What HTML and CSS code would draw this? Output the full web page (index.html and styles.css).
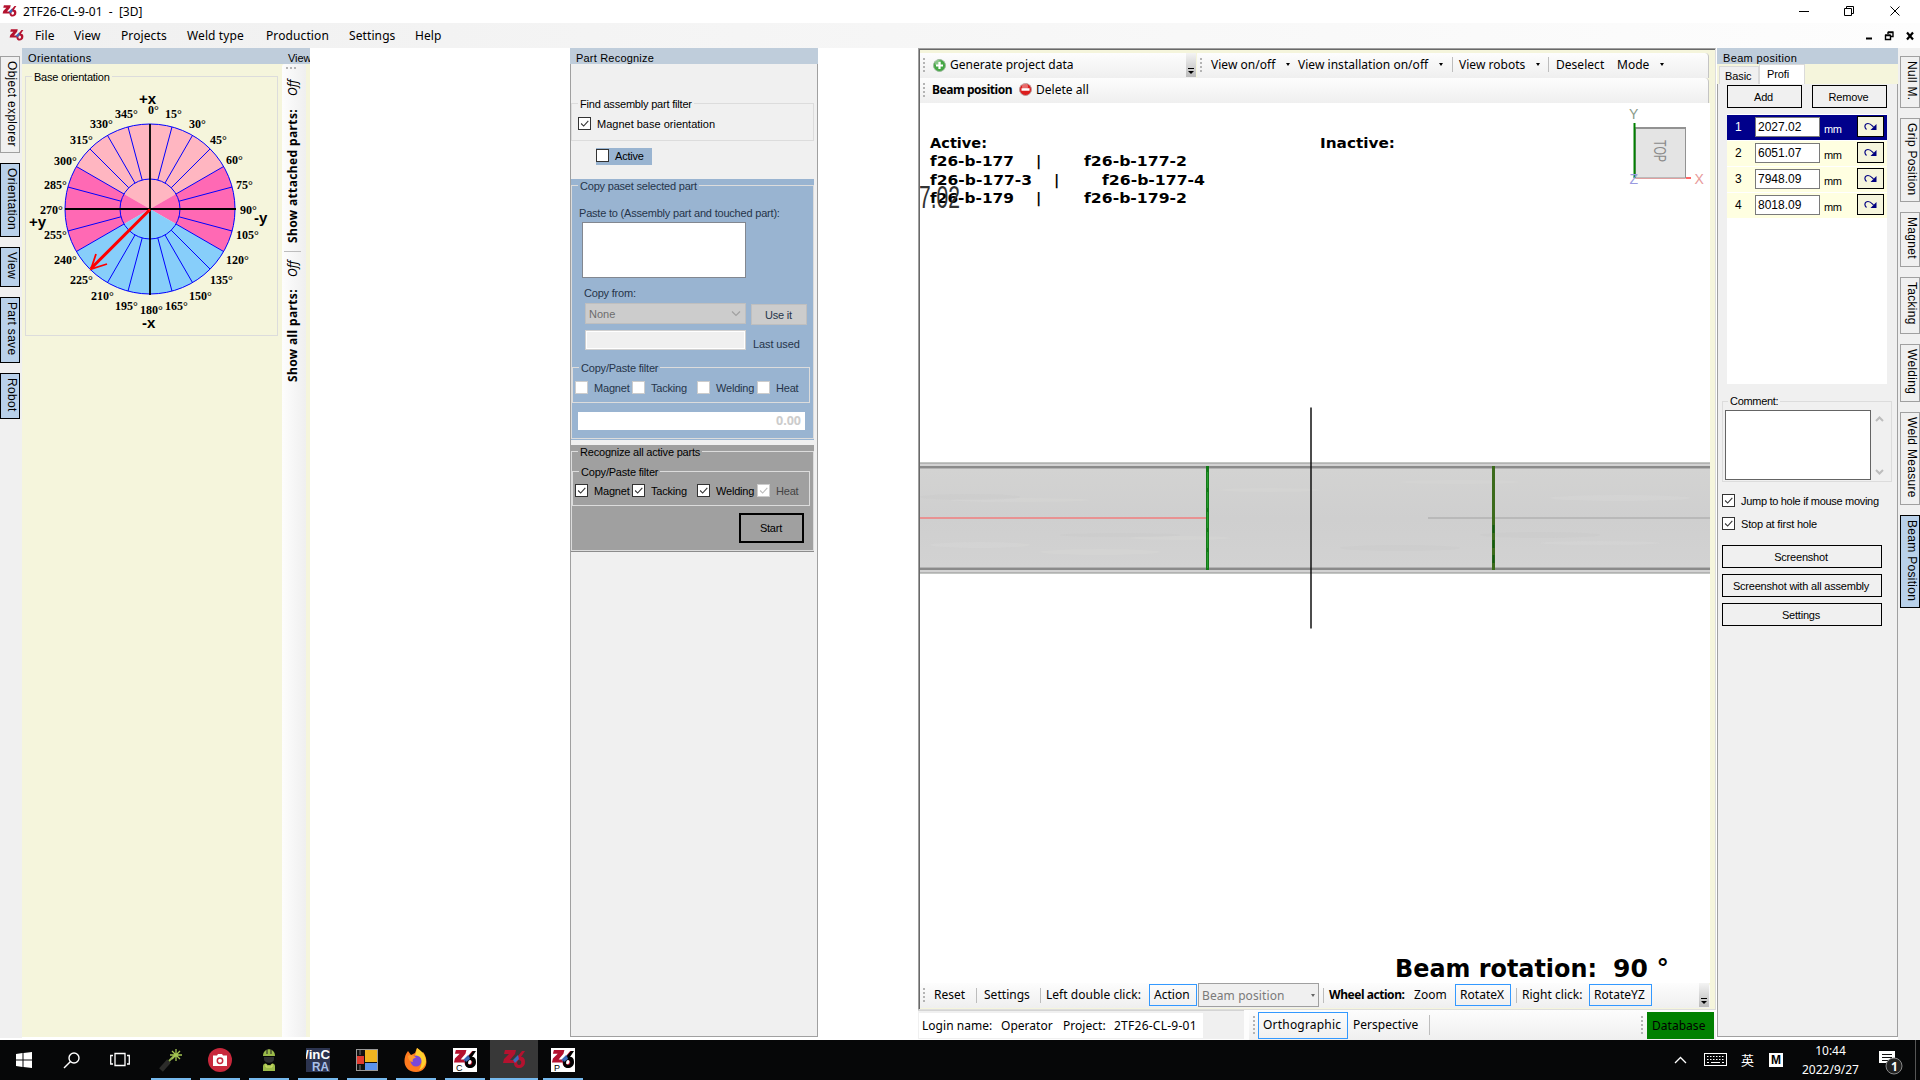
FILE: index.html
```html
<!DOCTYPE html>
<html lang="en">
<head>
<meta charset="utf-8">
<title>2TF26-CL-9-01 - [3D]</title>
<link rel="stylesheet" href="styles.css">
</head>
<body>
<svg width="0" height="0" class="defs">
  <defs>
    <symbol id="z6" viewBox="0 0 24 24">
      <path d="M3 2h11l-1 4-5 6h6l-1 3H1l1-4 5-5H2zM20 3h3l-4 6c3 0 4 2 4 5 0 4-3 6-6 6s-5-2-5-5c0-2 1-4 3-6zM17 12c-2 0-3 5 0 5s3-5 0-5z"/>
      <path d="M11 12l5-5 1 4-4 4z" fill="#3c6ab8"/>
    </symbol>
    <symbol id="tick" viewBox="0 0 13 13"><path d="M2.500 6.500l3 3 5.500-6" fill="none" stroke="currentColor" stroke-width="1.300"/></symbol>
    <symbol id="redo" viewBox="0 0 13 9"><path d="M2.500 7.500C0 5.500.5 1.500 4 1.500c2.500 0 3.500 1.500 5.500 3.500" fill="none" stroke="#000080" stroke-width="1.200"/><path d="M12.500 2v6H6.500z" fill="#000080"/></symbol>
  </defs>
</svg>

<header class="titlebar">
  <svg class="logo" width="15" height="15"><use href="#z6"/></svg>
  <span>2TF26-CL-9-01&nbsp; - &nbsp;[3D]</span>
  <svg class="win-buttons" width="104" height="14" fill="none" stroke="#000">
    <path d="M0 7.500h10M45.500 4.500h7v7h-7zM47.500 4V2.500h7v7H53M91.500 2.500l9 9M100.500 2.500l-9 9"/>
  </svg>
</header>

<nav class="menubar">
  <svg class="logo" width="15" height="15"><use href="#z6"/></svg>
  <span>File</span><span>View</span><span>Projects</span><span>Weld type</span><span>Production</span><span>Settings</span><span>Help</span>
  <svg class="mdi-buttons" width="50" height="14" fill="none" stroke="#000">
    <path d="M0 9.500h6" stroke-width="2"/><path d="M19.500 6.500h5v4h-5zM22 5V3.500h5v4h-2M22 3h5.500M19 6h5.500" stroke-width="1.400"/><path d="M41 3.500l6 7M47 3.500l-6 7" stroke-width="2.200"/>
  </svg>
</nav>

<main class="work">
  <aside class="side-tabs left">
    <div class="vtab t1">Object explorer</div>
    <div class="vtab on t2">Orientation</div>
    <div class="vtab on t3">View</div>
    <div class="vtab on t4">Part save</div>
    <div class="vtab on t5">Robot</div>
  </aside>

  <section class="orient">
    <h2 class="cap">Orientations</h2>
    <fieldset class="base">
      <legend>Base orientation</legend>
      <svg class="dial" width="250" height="244" viewBox="26 90 250 244">
        <path d="M150 209L76.400 166.500A85 85 0 0 1 223.600 166.500Z" fill="#ffb6c1"/>
        <path d="M150 209L223.600 166.500A85 85 0 0 1 223.600 251.500ZM150 209L76.400 251.500A85 85 0 0 1 76.400 166.500Z" fill="#ff69b4"/>
        <path d="M150 209L223.600 251.500A85 85 0 0 1 76.400 251.500Z" fill="#87cefa"/>
        <g fill="none" stroke="#00f">
          <circle cx="150" cy="209" r="85"/><circle cx="150" cy="209" r="30"/>
          <path d="M157.800 180L172 126.900M165 183L192.500 135.400M171.200 187.800L210.100 148.900M176 194L223.600 166.500M179 201.200L232.100 187M179 216.800L232.100 231M176 224L223.600 251.500M171.200 230.200L210.100 269.100M165 235L192.500 282.600M157.800 238L172 291.100M142.200 180L128 126.900M135 183L107.500 135.400M128.800 187.800L89.900 148.900M124 194L76.400 166.500M121 201.200L67.900 187M121 216.800L67.900 231M124 224L76.400 251.500M135 235L107.500 282.600M142.200 238L128 291.100"/>
        </g>
        <path d="M150 124v171M65 209h171" stroke="#000" stroke-width="1.800"/>
        <path d="M150 209.500L91 268.500" stroke="#f00" stroke-width="3"/>
        <path d="M96 254l-5 15 16-5" stroke="#f00" stroke-width="1.800" fill="none"/>
        <g class="deg">
          <text x="148" y="114">0°</text><text x="165" y="118">15°</text><text x="189" y="128">30°</text><text x="210" y="144">45°</text><text x="226" y="164">60°</text><text x="236" y="189">75°</text><text x="240" y="214">90°</text><text x="236" y="239">105°</text><text x="226" y="264">120°</text><text x="210" y="284">135°</text><text x="189" y="300">150°</text><text x="165" y="310">165°</text><text x="140" y="314">180°</text><text x="115" y="310">195°</text><text x="91" y="300">210°</text><text x="70" y="284">225°</text><text x="54" y="264">240°</text><text x="44" y="239">255°</text><text x="40" y="214">270°</text><text x="44" y="189">285°</text><text x="54" y="165">300°</text><text x="70" y="144">315°</text><text x="90" y="128">330°</text><text x="115" y="118">345°</text>
        </g>
        <g class="axis"><text x="139" y="104">+x</text><text x="142" y="328">-x</text><text x="29" y="227">+y</text><text x="254" y="223">-y</text></g>
      </svg>
    </fieldset>
  </section>

  <section class="viewcol">
    <h2 class="cap">View</h2>
    <div class="strip">
      <i class="hgrip"></i>
      <em class="up o1">Off</em><b class="up s1">Show attached parts:</b><hr>
      <em class="up o2">Off</em><b class="up s2">Show all parts:</b>
    </div>
  </section>

  <section class="recog">
    <h2 class="cap">Part Recognize</h2>
    <fieldset class="find">
      <legend>Find assembly part filter</legend>
      <label class="cb"><svg class="box"><use href="#tick"/></svg>Magnet base orientation</label>
    </fieldset>
    <label class="cb active-cb"><svg class="box"></svg>Active</label>
    <div class="blue">
      <fieldset>
        <legend>Copy paset selected part</legend>
        <p class="paste">Paste to (Assembly part and touched part):</p>
        <div class="listbox"></div>
        <p class="from">Copy from:</p>
        <div class="line l1"><div class="combo"><span>None</span><svg width="10" height="6"><path d="M1 .5l4 4 4-4" fill="none" stroke="#a0a0a0" stroke-width="1.200"/></svg></div><div class="useit">Use it</div></div>
        <div class="line l2"><div class="field"></div><span>Last used</span></div>
        <fieldset class="filter">
          <legend>Copy/Paste filter</legend>
          <div class="checks off"><label class="cb"><svg class="box"></svg>Magnet</label><label class="cb"><svg class="box"></svg>Tacking</label><label class="cb"><svg class="box"></svg>Welding</label><label class="cb"><svg class="box"></svg>Heat</label></div>
        </fieldset>
        <div class="num">0.00</div>
      </fieldset>
    </div>
    <div class="grey">
      <fieldset>
        <legend>Recognize all active parts</legend>
        <fieldset class="filter">
          <legend>Copy/Paste filter</legend>
          <div class="checks"><label class="cb"><svg class="box"><use href="#tick"/></svg>Magnet</label><label class="cb"><svg class="box"><use href="#tick"/></svg>Tacking</label><label class="cb"><svg class="box"><use href="#tick"/></svg>Welding</label><label class="cb dim"><svg class="box"><use href="#tick"/></svg>Heat</label></div>
        </fieldset>
        <div class="start">Start</div>
      </fieldset>
    </div>
  </section>

  <section class="center">
    <div class="frame">
      <div class="bars">
        <div class="bar gen"><i class="grip"></i>
          <svg width="13" height="13"><circle cx="6.500" cy="6.500" r="6" fill="#45a845" stroke="#9ab89a"/><circle cx="5" cy="4" r="3" fill="#fff" opacity=".35"/><path d="M6.500 3v7M3 6.500h7" stroke="#fff" stroke-width="2.200"/></svg>
          <span>Generate project data</span>
          <svg class="more" width="10" height="24"><path d="M2 15.500h6" stroke="#000"/><path d="M2 18h6l-3 3z"/></svg></div>
        <div class="bar views"><i class="grip"></i><span>View on/off</span><i class="dd"></i><span>View installation on/off</span><i class="dd"></i><i class="sep"></i><span>View robots</span><i class="dd"></i><i class="sep"></i><span>Deselect</span><span>Mode</span><i class="dd"></i></div>
      </div>
      <div class="bar beam"><i class="grip"></i><b>Beam position</b>
        <svg width="13" height="13"><circle cx="6.500" cy="6.500" r="6" fill="#dc1e1e" stroke="#b99"/><circle cx="6" cy="3.500" r="3" fill="#fff" opacity=".35"/><path d="M2.500 6.500h8" stroke="#fff" stroke-width="2.500"/></svg>
        <span>Delete all</span></div>
      <svg class="scene" width="790" height="880" viewBox="920 103 790 880">
        <defs>
          <linearGradient id="steel" x2="0" y2="1"><stop offset="0" stop-color="#d3d3d2"/><stop offset=".5" stop-color="#cfcfcf"/><stop offset="1" stop-color="#d2d2d2"/></linearGradient>
        </defs>
        <rect x="920" y="462" width="790" height="112" fill="#d2d2d2"/>
        <rect x="920" y="469" width="790" height="98" fill="url(#steel)"/>
        <g fill="#d8d8d6" opacity=".45"><ellipse cx="1020" cy="500" rx="70" ry="2"/><ellipse cx="980" cy="545" rx="50" ry="3"/><ellipse cx="1100" cy="552" rx="60" ry="3"/><ellipse cx="1180" cy="538" rx="50" ry="2"/><ellipse cx="1270" cy="490" rx="50" ry="2"/><ellipse cx="1460" cy="482" rx="60" ry="2"/><ellipse cx="1620" cy="498" rx="70" ry="3"/><ellipse cx="1600" cy="543" rx="60" ry="2"/></g>
        <g fill="#c8c8c8" opacity=".3"><ellipse cx="970" cy="497" rx="50" ry="3"/><ellipse cx="1120" cy="535" rx="60" ry="2"/><ellipse cx="1400" cy="548" rx="60" ry="3"/><ellipse cx="1540" cy="535" rx="60" ry="3"/></g>
        <path d="M920 462.500h790M920 573.500h790" stroke="#c3c6c3"/>
        <path d="M920 463.500h790M920 572.500h790M920 468.500h790M920 567.500h790" stroke="#b2b2b2"/>
        <path d="M920 467h790M920 569h790" stroke="#8a8a8a" stroke-width="2"/>
        <path d="M920 518h287" stroke="#e89292" stroke-width="2"/>
        <path d="M1428 518h282" stroke="#b9b9b9" stroke-width="2"/>
        <path d="M1207.500 466v104" stroke="#127a18" stroke-width="3"/><path d="M1207.500 472v97" stroke="#2a9a30" stroke-dasharray="16 4"/>
        <path d="M1493.500 466v104" stroke="#3c6b1c" stroke-width="3"/><path d="M1493.500 525v40" stroke="#125c12" stroke-width="2" stroke-dasharray="8 7"/>
        <path d="M1311 407.500v221" stroke="#111" stroke-width="1.500"/>
        <g class="parts">
          <text x="930" y="148" textLength="57" lengthAdjust="spacingAndGlyphs">Active:</text><text x="1320" y="148" textLength="75" lengthAdjust="spacingAndGlyphs">Inactive:</text>
          <text x="930" y="166" textLength="84" lengthAdjust="spacingAndGlyphs">f26-b-177</text><text x="1036" y="166">|</text><text x="1084" y="166" textLength="103" lengthAdjust="spacingAndGlyphs">f26-b-177-2</text>
          <text x="930" y="185" textLength="102" lengthAdjust="spacingAndGlyphs">f26-b-177-3</text><text x="1054" y="185">|</text><text x="1102" y="185" textLength="103" lengthAdjust="spacingAndGlyphs">f26-b-177-4</text>
          <text x="930" y="203" textLength="84" lengthAdjust="spacingAndGlyphs">f26-b-179</text><text x="1036" y="203">|</text><text x="1084" y="203" textLength="103" lengthAdjust="spacingAndGlyphs">f26-b-179-2</text>
        </g>
        <text class="dim-label" x="919" y="207.500" textLength="41" lengthAdjust="spacingAndGlyphs">7.02</text>
        <rect x="1635.500" y="128.500" width="50" height="49.500" fill="#e4e4e4" stroke="#929292"/>
        <path d="M1635 128h51" stroke="#929292" stroke-width="2"/>
        <path d="M1636 178.500h49" stroke="#e0a0a0"/><path d="M1686 178h5" stroke="#f33" stroke-width="1.500"/>
        <path d="M1634.500 123v55" stroke="#008000" stroke-width="2"/>
        <g class="cube"><text x="1629" y="118.500" fill="#8a9a8a">Y</text><text x="1694.500" y="184" fill="#e89a9a">X</text><text x="1629.500" y="184" fill="#9a9ae0">Z</text></g>
        <text class="top" transform="translate(1654 140) rotate(90)" textLength="22" lengthAdjust="spacingAndGlyphs">TOP</text>
        <g class="rot"><text x="1395" y="976.500" textLength="202" lengthAdjust="spacingAndGlyphs">Beam rotation:</text><text x="1613" y="976.500" textLength="56" lengthAdjust="spacingAndGlyphs">90 °</text></g>
      </svg>
      <div class="bar bottom"><i class="grip"></i><span>Reset</span><i class="sep"></i><span>Settings</span><i class="sep"></i><span>Left double click:</span><span class="sel">Action</span><span class="bcombo">Beam position<i class="dd"></i></span><i class="sep"></i><b>Wheel action:</b><span>Zoom</span><span class="sel">RotateX</span><i class="sep"></i><span>Right click:</span><span class="sel">RotateYZ</span>
        <svg class="more" width="10" height="24"><path d="M2 15.500h6" stroke="#000"/><path d="M2 18h6l-3 3z"/></svg></div>
    </div>
    <div class="status">
      <div class="login"><span>Login name:</span><span>Operator</span><span>Project:</span><span>2TF26-CL-9-01</span></div>
      <div class="proj"><i class="grip"></i><span class="sel">Orthographic</span><span>Perspective</span><i class="sep"></i><i class="grip"></i><span class="db">Database</span></div>
    </div>
  </section>

  <section class="beampos">
    <h2 class="cap">Beam position</h2>
    <div class="tabs"><span>Basic</span><span class="cur">Profi</span></div>
    <div class="pane">
      <div class="two"><div class="btn">Add</div><div class="btn">Remove</div></div>
      <div class="list">
        <div class="row cur"><span>1</span><span class="inp">2027.02</span><span class="mm">mm</span><span class="go"><svg width="13" height="9"><use href="#redo"/></svg></span></div>
        <div class="row"><span>2</span><span class="inp">6051.07</span><span class="mm">mm</span><span class="go"><svg width="13" height="9"><use href="#redo"/></svg></span></div>
        <div class="row"><span>3</span><span class="inp">7948.09</span><span class="mm">mm</span><span class="go"><svg width="13" height="9"><use href="#redo"/></svg></span></div>
        <div class="row"><span>4</span><span class="inp">8018.09</span><span class="mm">mm</span><span class="go"><svg width="13" height="9"><use href="#redo"/></svg></span></div>
      </div>
      <fieldset class="comment">
        <legend>Comment:</legend>
        <div class="cbody"><div class="memo"></div>
          <svg width="9" height="70" fill="none" stroke="#bdbdbd" stroke-width="2"><path d="M1 11l3.500-3.500L8 11M1 60l3.500 3.500L8 60"/></svg></div>
      </fieldset>
      <label class="cb c1"><svg class="box"><use href="#tick"/></svg>Jump to hole if mouse moving</label>
      <label class="cb c2"><svg class="box"><use href="#tick"/></svg>Stop at first hole</label>
      <div class="btns"><div class="btn">Screenshot</div><div class="btn">Screenshot with all assembly</div><div class="btn">Settings</div></div>
    </div>
  </section>

  <aside class="side-tabs right">
    <div class="vtab r1">Null M.</div>
    <div class="vtab r2">Grip Position</div>
    <div class="vtab r3">Magnet</div>
    <div class="vtab r4">Tacking</div>
    <div class="vtab r5">Welding</div>
    <div class="vtab r6">Weld Measure</div>
    <div class="vtab on r7">Beam Position</div>
  </aside>
</main>

<footer class="taskbar">
  <div class="sys">
    <svg width="16" height="16" fill="#fff"><path d="M0 2l6.500-1v6.500H0zM7.500 1L16 0v7.500H7.500zM0 8.500h6.500V15L0 14zM7.500 8.500H16V16l-8.500-1z"/></svg>
    <svg width="17" height="17" fill="none" stroke="#fff" stroke-width="1.400"><circle cx="11" cy="6" r="5"/><path d="M7.500 9.500L1 16"/></svg>
    <svg width="20" height="16" fill="none" stroke="#fff" stroke-width="1.300"><path d="M5 1.500h10v12H5zM3 3.500H.7v8.500H3M17 3.500h2.300v8.500H17"/></svg>
  </div>
  <div class="apps">
    <span class="app"><svg width="24" height="24"><path d="M2 22l8-9" stroke="#2c2c2a" stroke-width="5"/><path d="M10 13l6-6" stroke="#8fae4c" stroke-width="2"/><path d="M17 1v12M11 7h12M13 3l8 8M21 3l-8 8" stroke="#a4c651" stroke-width="1.300"/></svg></span>
    <span class="app"><svg width="24" height="24"><circle cx="12" cy="12" r="12" fill="#c8283c"/><path d="M5 7.500h4l1-1.500h4l1 1.500h4V18H5z" fill="#fff"/><circle cx="12" cy="12.800" r="2.700" fill="none" stroke="#c8283c" stroke-width="1.500"/></svg></span>
    <span class="app"><svg width="24" height="24"><path d="M6 8c0-9 12-9 12 0z" fill="#9bbb4a"/><path d="M10 1v5M14 1v5" stroke="#222"/><path d="M7 9h10v2c0 5-10 5-10 0z" fill="#2c2e30"/><path d="M6 18c0-2 2-2.500 3-2.500 1 2 5 2 6 0 1 0 3 .5 3 2.500v5H6z" fill="#9bbb4a"/><path d="M9 16v3h6v-3" fill="none" stroke="#d9e36a"/></svg></span>
    <span class="app"><svg width="24" height="24"><rect width="24" height="24" fill="#2c3450"/><text class="wc" x="-1" y="11" textLength="25" lengthAdjust="spacingAndGlyphs" fill="#fff">/inC</text><text class="wc" x="6" y="23" textLength="17" lengthAdjust="spacingAndGlyphs" fill="#a9c0ea">RA</text></svg></span>
    <span class="app"><svg width="24" height="24"><rect x="1.500" y="1.500" width="21" height="21" fill="#111" stroke="#999"/><path d="M2 8h7v8H2z" fill="#e23b30"/><path d="M10 2h12v12H10z" fill="#f0b420"/><path d="M10 15h12v7H10z" fill="#5b93ee"/><path d="M5 2v5M5 17v5" stroke="#777"/></svg></span>
    <span class="app"><svg width="24" height="24"><path d="M4 3l3 4 4-2 2-5c3 2 4 4 4 6l2-2c5 6 6 19-7 20C-1 24-2 10 4 3z" fill="#ff7a1e"/><path d="M13 0c6 4 9 8 9 14-1 4-4 7-7 8 5-7 2-13-4-14z" fill="#ffcf2e"/><circle cx="12" cy="13" r="5.500" fill="#7a48d8"/><path d="M4 8c3-2 6-1 8 2-3 0-4 2-3 4-3 0-5-3-5-6z" fill="#ff9a2e"/></svg></span>
    <span class="app"><svg width="24" height="24"><rect width="24" height="24" fill="#fff"/><svg width="23" height="23" fill="#b4122f"><use href="#z6"/></svg><path d="M20 3h3l-4 6c3 0 4 2 4 5 0 4-3 6-6 6s-5-2-5-5c0-2 1-4 3-6zM17 12c-2 0-3 5 0 5s3-5 0-5z" fill="#000"/><path d="M12 11l4-3 1 3-4 3z" fill="#3c6ab8"/><text class="sub" x="3" y="22.500">C</text></svg></span>
    <span class="app cur"><svg width="24" height="24" fill="#b4122f"><use href="#z6"/></svg></span>
    <span class="app"><svg width="24" height="24"><rect width="24" height="24" fill="#fff"/><svg width="23" height="23" fill="#b4122f"><use href="#z6"/></svg><path d="M20 3h3l-4 6c3 0 4 2 4 5 0 4-3 6-6 6s-5-2-5-5c0-2 1-4 3-6zM17 12c-2 0-3 5 0 5s3-5 0-5z" fill="#000"/><path d="M12 11l4-3 1 3-4 3z" fill="#3c6ab8"/><text class="sub" x="3" y="22.500">P</text></svg></span>
  </div>
  <div class="tray">
    <svg width="13" height="8" fill="none" stroke="#fff" stroke-width="1.300"><path d="M1 7l5.500-5.500L12 7"/></svg>
    <svg width="23" height="14" fill="none" stroke="#fff"><rect x=".5" y=".5" width="22" height="12"/><path d="M3 3.500h17M3 6.500h17" stroke-dasharray="1.500 1.500"/><path d="M3 9.500h2M7 9.500h9M18 9.500h2"/></svg>
    <span class="ime">英</span>
    <span class="m">M</span>
    <div class="clock"><span>10:44</span><span>2022/9/27</span></div>
    <svg width="26" height="26"><path d="M1 1h16v12h-5l-3 3v-3H1z" fill="#fff"/><path d="M4 4.500h10M4 7.500h10M4 10.500h6" stroke="#111"/><circle cx="16" cy="16" r="8" fill="#222" stroke="#888"/><text class="badge" x="13" y="20.500">1</text></svg>
    <i class="peek"></i>
  </div>
</footer>
</body>
</html>
```
FILE: styles.css
```css
* { box-sizing: border-box; }
body { margin: 0; width: 1920px; height: 1080px; overflow: hidden; background: #fff; color: #000; font: 11px/14px "Liberation Sans", Arial, sans-serif; letter-spacing: -.2px; display: flex; flex-direction: column; }
h2, p { margin: 0; font-weight: normal; font-size: inherit; }
span, label, legend, b, em { white-space: nowrap; }
svg { display: block; flex: none; letter-spacing: 0; }
.defs { position: absolute; }
.logo { fill: #b4122f; }

.titlebar { height: 23px; flex: none; display: flex; align-items: center; padding-left: 2px; font: 12px/16px "Noto Sans", sans-serif; letter-spacing: 0; }
.titlebar span { margin-left: 6px; }
.win-buttons { margin-left: auto; margin-right: 17px; margin-bottom: 2px; }
.menubar { height: 25px; flex: none; display: grid; grid-template-columns: 26px 39px 47px 66px 79px 83px 66px 1fr 54px; align-items: center; padding-left: 9px; background: linear-gradient(90deg, #f0f0f0, #fdfdfd); font: 12px/16px "Noto Sans", sans-serif; letter-spacing: .1px; }

.work { height: 992px; flex: none; display: flex; }
.cap { height: 16px; flex: none; background: #bfcddb; font-size: 11px; line-height: 20px; letter-spacing: .35px; padding-left: 6px; overflow: hidden; white-space: nowrap; }

.side-tabs { width: 22px; flex: none; background: #f0f0f0; display: flex; flex-direction: column; gap: 10px; padding-top: 8px; height: 990px; }
.side-tabs.right { padding-left: 2px; height: 992px; width: 22px; }
.vtab { width: 20px; flex: none; border: 1px solid #a0a0a0; writing-mode: vertical-rl; font-size: 12px; line-height: 14px; letter-spacing: .3px; padding: 4px 0 0 0; white-space: nowrap; }
.right .vtab { padding-right: 0; }
.vtab.on { background: #b9d1ea; border-color: #000; }
.t1 { height: 97px; } .t2 { height: 74px; } .t3 { height: 40px; } .t4 { height: 66px; } .t5 { height: 46px; }
.r1 { height: 52px; } .r2 { height: 84px; } .r3 { height: 55px; } .r4 { height: 57px; } .r5 { height: 58px; } .r6 { height: 93px; } .r7 { height: 93px; }

fieldset { margin: 0; padding: 0; min-width: 0; border: 1px solid #dcdcdc; }
legend { margin-left: 6px; padding: 0 2px; height: 13px; line-height: 15px; }

.orient { width: 260px; flex: none; height: 989px; background: #f5f5dc; }
.base { width: 253px; height: 266px; margin: 6px 0 0 3px; }
.base legend { letter-spacing: -.25px; }
.dial { margin-top: 7px; }
.deg { font: bold 12px "Liberation Serif", serif; }
.axis { font: bold 15px "Liberation Sans", sans-serif; }

.viewcol { width: 28px; flex: none; height: 989px; background: #f5f5dc; }
.viewcol .cap { letter-spacing: -.1px; }
.strip { width: 24px; height: 973px; background: linear-gradient(90deg, #fdfdfd, #efefef); display: flex; flex-direction: column; border-radius: 3px 3px 0 0; }
.hgrip { width: 10px; height: 2px; margin: 3px 0 0 4px; flex: none; background: repeating-linear-gradient(90deg, #b4b4b4 0 2px, transparent 2px 4px); }
.up { writing-mode: vertical-rl; transform: rotate(180deg); line-height: 16px; width: 16px; margin-left: 3px; font-family: "Noto Sans", sans-serif; font-size: 12px; letter-spacing: 0; }
b.up { letter-spacing: .38px; }
.o1 { margin-top: 8px; height: 19px; }
.s1 { margin-top: 12px; height: 135px; }
.strip hr { width: 17px; margin: 8px 0 0 2px; border: 0; border-top: 1px solid #bdbdbd; flex: none; }
.o2 { margin-top: 6px; height: 19px; }
.s2 { margin-top: 11px; height: 94px; }

.recog { width: 248px; flex: none; height: 989px; margin-left: 260px; background: #f0f0f0; border: solid #a0a0a0; border-width: 0 1px 1px 1px; display: flex; flex-direction: column; align-items: flex-start; }
.recog .cap { width: 248px; margin-left: -1px; letter-spacing: .2px; }
.cb { display: flex; align-items: center; gap: 6px; height: 13px; }
.box { width: 13px; height: 13px; background: #fff; border: 1px solid #333; color: #333; }
.find { width: 243px; height: 44px; margin-top: 33px; }
.find .cb { margin: 7px 0 0 6px; letter-spacing: 0; }
.active-cb { width: 56px; height: 17px; margin: 7px 0 0 25px; background: #99b4d1; padding-bottom: 2px; }
.blue { width: 243px; height: 261px; margin-top: 14px; background: #99b4d1; color: #26354a; }
.blue > fieldset { height: 260px; }
.paste { margin: 14px 0 0 7px; white-space: nowrap; }
.listbox { width: 164px; height: 56px; margin: 2px 0 0 10px; background: #fff; border: 1px solid #828790; }
.from { margin: 8px 0 0 12px; }
.line { display: flex; margin-left: 13px; }
.l1 { height: 22px; margin-top: 3px; gap: 5px; }
.combo { width: 161px; height: 21px; background: #ccc; border: 1px solid #bfbfbf; color: #6d6d6d; display: flex; align-items: center; justify-content: space-between; padding: 0 4px 0 3px; letter-spacing: 0; }
.useit { width: 56px; height: 21px; margin-top: 1px; background: #ccc; border: 1px solid #bfbfbf; text-align: center; line-height: 20px; padding-right: 1px; }
.l2 { height: 21px; margin-top: 5px; gap: 7px; }
.field { width: 161px; height: 20px; background: #f0f0f0; border: 1px solid #d0d0d0; box-shadow: inset 0 0 0 1px #fff; }
.l2 span { padding-top: 7px; letter-spacing: -.1px; }
.filter { width: 238px; height: 42px; margin-top: 10px; }
.filter legend { line-height: 14px; }
.checks { display: grid; grid-template-columns: 57px 65px 60px auto; padding: 7px 0 0 2px; }
.off .box { border-color: #ccc; }
.num { width: 227px; height: 18px; margin: 9px 0 0 6px; background: #fff; color: #ccc; font: bold 12.5px/18px "Noto Sans", sans-serif; letter-spacing: 0; text-align: right; padding-right: 4px; }
.grey { width: 243px; height: 107px; margin-top: 5px; background: #a0a0a0; border-bottom: 1px solid #8c8c8c; }
.grey > fieldset { height: 106px; }
.grey .filter { margin-top: 7px; height: 41px; }
.grey .checks { padding-top: 6px; }
.dim { color: #444; }
.dim .box { border-color: #ccc; color: #bbb; }
.start { width: 65px; height: 30px; margin: 7px 0 0 167px; border: 2px solid #000; text-align: center; line-height: 26px; padding-right: 1px; }

.center { width: 798px; flex: none; margin-left: 100px; font: 12px/16px "Noto Sans", sans-serif; letter-spacing: .03px; display: flex; flex-direction: column; }
.frame { height: 962px; flex: none; padding: 4px 0 0 1px; background: #f5f5dc; border: 1px solid; border-color: #a0a0a0 #ddd #ddd #a0a0a0; box-shadow: inset 1px 1px 0 #696969; }
.bars { display: flex; width: 789px; gap: 1px; }
.bar { height: 25px; display: grid; align-items: center; background: linear-gradient(#fdfdfd, #efefef); border-radius: 0 4px 0 0; padding-bottom: 2px; }
.grip { width: 2px; height: 14px; background: repeating-linear-gradient(#b4b4b4 0 2px, transparent 2px 4px); }
.sep { width: 1px; height: 15px; background: #bdbdbd; }
.dd { width: 0; height: 0; border: solid transparent; border-width: 3px 2.5px 0; border-top-color: #000; }
.more { background: linear-gradient(#f4f4f4, #bbb); align-self: start; }
.gen { width: 276px; grid-template-columns: 10px 17px 236px 10px; padding-left: 3px; }
.views { width: 512px; grid-template-columns: 11px 75px 12px 141px 13px 7px 77px 12px 8px 61px 43px auto; padding-left: 3px; border-right: 1px solid #c4c4c4; }
.beam { width: 789px; grid-template-columns: 9px 87px 17px auto; justify-content: start; padding-left: 3px; border-right: 1px solid #c4c4c4; }
.beam b, .bottom b { letter-spacing: -.45px; }
.scene { background: #fff; }
.parts { font: bold 14.500px "DejaVu Sans", Verdana, sans-serif; }
.dim-label { font: 31px "Liberation Sans", sans-serif; fill: #333; }
.cube { font: 14px "Liberation Sans", sans-serif; }
.top { font: 16px "Liberation Sans", sans-serif; fill: #8a8a8a; }
.rot { font: bold 24px "DejaVu Sans", Verdana, sans-serif; }
.bottom { width: 790px; grid-template-rows: 24px; grid-template-columns: 11px 42px 8px 56px 6px 103px 49px 125px 6px 85px 41px 61px 6px 67px 110px 10px; padding: 0 0 1px 3px; }
.sel { border: 1px solid #3399ff; height: 22px; line-height: 19px; padding-left: 4px; justify-self: start; }
.bottom .sel { padding-right: 6px; }
.bcombo { width: 121px; height: 24px; border: 1px solid #a0a0a0; background: #f0f0f0; color: #7a7a7a; display: flex; align-items: center; justify-content: space-between; padding: 1px 3px 0; letter-spacing: .1px; }
.bcombo .dd { border-top-color: #666; }
.status { height: 30px; display: flex; background: #fdfdfd; }
.login { width: 326px; background: #f0f0f0; border-top: 1px solid #d4d4d4; display: grid; grid-template-columns: 79px 62px 51px 92px; height: 29px; align-items: center; padding: 2px 0 2px 1px; }
.login span { background: #fff; height: 25px; line-height: 25px; padding-left: 3px; }
.login span:last-child { letter-spacing: .25px; }
.proj { width: 467px; margin-left: 5px; display: grid; grid-template-columns: 5px 95px 76px 212px 6px auto; padding-left: 4px; align-items: center; background: linear-gradient(#fdfdfd, #efefef); height: 30px; }
.proj .sel { height: 27px; width: 90px; line-height: 24px; letter-spacing: .2px; }
.proj .grip { height: 18px; } .proj .sep { height: 20px; }
.db { background: #008000; width: 67px; height: 27px; line-height: 27px; padding-left: 5px; }

.beampos { width: 181px; flex: none; margin-left: 1px; height: 989px; background: #f0f0f0; display: flex; flex-direction: column; }
.tabs { height: 20px; flex: none; background: #f5f5dc; display: flex; padding-left: 2px; align-items: flex-end; letter-spacing: -.1px; }
.tabs span { width: 40px; height: 18px; background: #f0f0f0; border: 1px solid #dadada; border-bottom: 0; padding-left: 5px; line-height: 19px; }
.tabs .cur { width: 46px; height: 20px; background: #fff; padding-left: 7px; line-height: 18px; }
.pane { flex: 1; border: 1px solid #a0a0a0; border-top: 0; display: flex; flex-direction: column; align-items: flex-start; padding: 1px 0 0 9px; }
.btn { border: 1px solid #000; height: 23px; line-height: 23px; text-align: center; font-size: 11px; padding-right: 2px; }
.two { display: grid; grid-template-columns: 75px 75px; gap: 10px; }
.list { width: 160px; height: 270px; margin-top: 6px; padding-top: 1px; background: #fff; display: flex; flex-direction: column; gap: 1px; }
.row { height: 25px; background: #ffffe1; display: grid; grid-template-columns: 28px 69px 33px 27px; font-size: 12px; letter-spacing: 0; }
.row > span:first-child { padding-left: 8px; line-height: 25px; }
.row.cur { background: #00008b; color: #fff; }
.inp { width: 65px; height: 20px; margin-top: 2px; border: 1px solid #7a7a7a; background: #fff; color: #000; line-height: 18px; padding-left: 2px; }
.row .mm { line-height: 29px; font-size: 11px; letter-spacing: -.5px; }
.row .go { height: 21px; margin-top: 1px; border: 1px solid #000; background: #f5f5dc; display: grid; place-items: center; }
.comment { width: 170px; height: 87px; margin: 11px 0 0 -5px; }
.comment legend { margin-left: 5px; line-height: 13px; letter-spacing: -.3px; }
.cbody { display: flex; gap: 4px; padding: 2px 0 0 2px; }
.memo { width: 146px; height: 70px; background: #fff; border: 1px solid #646464; }
.c1 { margin: 12px 0 0 -5px; letter-spacing: -.3px; } .c2 { margin: 10px 0 0 -5px; }
.btns { width: 160px; margin: 15px 0 0 -5px; display: grid; gap: 6px; }

.taskbar { height: 40px; flex: none; background: #060708; display: flex; color: #fff; letter-spacing: 0; }
.sys { display: flex; width: 147px; align-items: center; padding-left: 16px; gap: 31px; }
.sys svg:nth-child(3) { margin-left: -1px; }
.apps { display: flex; gap: 1px; }
.app { width: 48px; height: 40px; display: grid; place-items: center; background: linear-gradient(#76b9ed, #76b9ed) 50% 100% / 40px 2px no-repeat; }
.app.cur { background: linear-gradient(#76b9ed, #76b9ed) 50% 100% / 48px 2px no-repeat #383838; }
.wc { font: bold 12px "Liberation Sans", sans-serif; }
.sub { font: 9px "Liberation Sans", sans-serif; }
.tray { margin-left: auto; display: grid; grid-template-columns: 30px 37px 28px 14px 17px 61px 17px 37px 5px; align-items: center; width: 246px; font: 12px/16px "Noto Sans", sans-serif; }
.ime { font: 13px/16px "Noto Sans CJK SC", sans-serif; }
.m { width: 14px; height: 14px; background: #fff; color: #000; text-align: center; font: bold 12px/14px "Liberation Sans", sans-serif; }
.clock { grid-column: 6; display: flex; flex-direction: column; align-items: center; gap: 3px; }
.tray svg:nth-of-type(3) { grid-column: 8; margin-top: 6px; }
.badge { font: bold 12px "Noto Sans", sans-serif; fill: #fff; }
.peek { width: 1px; height: 40px; background: #555; }
```
